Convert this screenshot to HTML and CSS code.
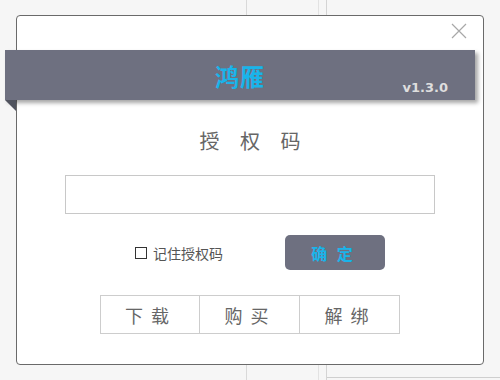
FILE: index.html
```html
<!DOCTYPE html>
<html lang="zh-CN">
<head>
  <meta charset="UTF-8">
  <meta name="viewport" content="width=device-width, initial-scale=1.0">
  <title>鸿雁 - 授权码</title>
  <link rel="stylesheet" href="styles.css">
</head>
<body>
  <div class="auth-dialog">
    <div class="dialog-top">
      <button class="close-btn" title="关闭">
        <svg width="16" height="16" viewBox="0 0 16 16">
          <path d="M1 1 L15 15 M15 1 L1 15" stroke="#a8a8a8" stroke-width="1.2" fill="none"/>
        </svg>
      </button>
    </div>

    <div class="banner">
      <div></div>
      <div class="banner-title">鸿雁</div>
      <div class="banner-version">v1.3.0</div>
    </div>

    <div class="auth-title">授 权 码</div>

    <input class="auth-input" type="text">

    <div class="auth-row">
      <label class="remember">
        <span class="remember-box"></span>
        <span>记住授权码</span>
      </label>
      <button class="confirm-btn">确 定</button>
    </div>

    <div class="link-group">
      <button class="link-btn">下 载</button>
      <button class="link-btn">购 买</button>
      <button class="link-btn">解 绑</button>
    </div>
  </div>
</body>
</html>
```

FILE: styles.css
```css
body, html {
  margin: 0;
  padding: 0;
  width: 100%;
  height: 100%;
  overflow: hidden;
  font-family: 'Noto Sans CJK SC', 'Noto Sans', sans-serif;
}

body {
  background-color: #f6f6f6;
  background-image:
    linear-gradient(#d9d9d9, #d9d9d9),
    linear-gradient(#e2e2e2, #e2e2e2),
    linear-gradient(#d4d4d4, #d4d4d4),
    linear-gradient(#cfcfcf, #cfcfcf);
  background-size: 1px 100%, 1px 100%, 1px 100%, 100% 1px;
  background-position: 246px 0, 318px 0, 326px 0, 326px 377px;
  background-repeat: no-repeat;
}

.auth-dialog {
  box-sizing: border-box;
  width: 468px;
  height: 350px;
  margin: 15px 0 0 16px;
  background: #fff;
  border: 1px solid #6a6a6a;
  border-radius: 4px;
  display: flex;
  flex-direction: column;
  align-items: center;
}

.dialog-top {
  align-self: stretch;
  height: 34px;
  display: flex;
  justify-content: flex-end;
  align-items: flex-start;
  padding: 7px 16px 0 0;
  box-sizing: border-box;
}

.close-btn {
  border: none;
  background: none;
  padding: 0;
  width: 16px;
  height: 16px;
  cursor: pointer;
  display: block;
}

.close-btn svg {
  display: block;
}

.banner {
  align-self: flex-start;
  margin-left: -12px;
  width: 470px;
  height: 50px;
  background: #6e7080;
  box-shadow: 3px 3px 4px rgba(0, 0, 0, 0.35);
  display: grid;
  grid-template-columns: 1fr auto 1fr;
  align-items: center;
  position: relative;
}

.banner::after {
  content: '';
  position: absolute;
  left: 0;
  top: 50px;
  border-top: 11px solid #50535e;
  border-left: 11px solid transparent;
}

.banner-title {
  font-size: 24px;
  font-weight: 700;
  color: #19b4ea;
  letter-spacing: 1px;
}

.banner-version {
  justify-self: end;
  align-self: end;
  padding: 0 27px 5px 0;
  font-family: 'DejaVu Sans', sans-serif;
  font-size: 13px;
  font-weight: 700;
  color: #dedede;
}

.auth-title {
  margin-top: 30px;
  font-size: 20px;
  line-height: 22px;
  color: #666;
  letter-spacing: 8px;
  padding-left: 8px;
  white-space: pre;
}

.auth-input {
  box-sizing: border-box;
  margin-top: 23px;
  width: 370px;
  height: 39px;
  border: 1px solid #c8c8c8;
  outline: none;
  background: #fff;
}

.auth-row {
  margin-top: 21px;
  display: flex;
  align-items: center;
  gap: 62px;
  align-self: flex-start;
  margin-left: 118px;
}

.remember {
  display: flex;
  align-items: center;
  gap: 6px;
  font-size: 14px;
  color: #555;
}

.remember-box {
  box-sizing: border-box;
  width: 12px;
  height: 12px;
  border: 1px solid #333;
}

.confirm-btn {
  width: 100px;
  height: 35px;
  border: none;
  border-radius: 5px;
  background: #6e7080;
  color: #19b4ea;
  font-family: inherit;
  font-size: 16px;
  font-weight: 700;
  letter-spacing: 3px;
  padding-left: 3px;
  cursor: pointer;
}

.link-group {
  margin-top: 25px;
  display: flex;
}

.link-btn {
  box-sizing: border-box;
  width: 100px;
  height: 39px;
  border: 1px solid #cdcdcd;
  background: #fff;
  color: #666;
  font-family: inherit;
  font-size: 18px;
  letter-spacing: 2px;
  padding-left: 2px;
  cursor: pointer;
}

.link-btn + .link-btn {
  border-left: none;
}
```
